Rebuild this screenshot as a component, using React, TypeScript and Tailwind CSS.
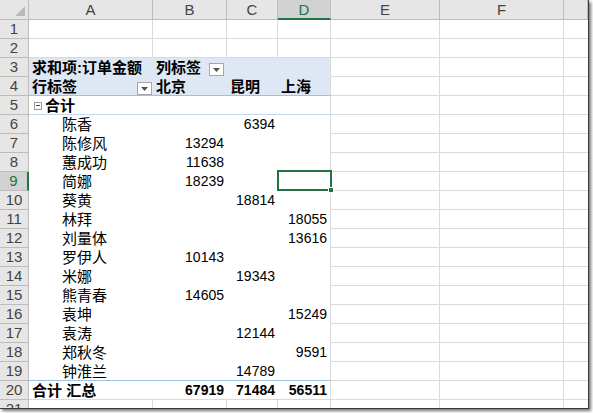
import React from "react";

const COLS = ["A", "B", "C", "D", "E", "F", ""];

type Cell = { text?: string; bold?: boolean; align?: "l" | "r"; indent?: number; dd?: "a" | "b"; tree?: boolean };

const names: [string, string, string, string][] = [
  ["陈香", "", "6394", ""],
  ["陈修风", "13294", "", ""],
  ["蕙成功", "11638", "", ""],
  ["简娜", "18239", "", ""],
  ["葵黄", "", "18814", ""],
  ["林拜", "", "", "18055"],
  ["刘量体", "", "", "13616"],
  ["罗伊人", "10143", "", ""],
  ["米娜", "", "19343", ""],
  ["熊青春", "14605", "", ""],
  ["袁坤", "", "", "15249"],
  ["袁涛", "", "12144", ""],
  ["郑秋冬", "", "", "9591"],
  ["钟淮兰", "", "14789", ""],
];

function rowCells(r: number): Cell[] {
  if (r === 3) return [{ text: "求和项:订单金额", bold: true }, { text: "列标签", bold: true, dd: "b" }, {}, {}];
  if (r === 4)
    return [
      { text: "行标签", bold: true, dd: "a" },
      { text: "北京", bold: true },
      { text: "昆明", bold: true },
      { text: "上海", bold: true },
    ];
  if (r === 5) return [{ text: "合计", bold: true, tree: true }, {}, {}, {}];
  if (r >= 6 && r <= 19) {
    const n = names[r - 6];
    return [
      { text: n[0], indent: 1 },
      { text: n[1], align: "r" },
      { text: n[2], align: "r" },
      { text: n[3], align: "r" },
    ];
  }
  if (r === 20)
    return [
      { text: "合计 汇总", bold: true },
      { text: "67919", bold: true, align: "r" },
      { text: "71484", bold: true, align: "r" },
      { text: "56511", bold: true, align: "r" },
    ];
  return [{}, {}, {}, {}];
}

function DropDown({ pos }: { pos: "a" | "b" }) {
  return (
    <span
      className={
        "absolute top-[5px] flex h-[13px] w-[15px] items-center justify-center border border-[#a6a6a6] bg-white " +
        (pos === "a" ? "right-[1px]" : "right-[3px]")
      }
    >
      <svg width="7" height="4" viewBox="0 0 7 4">
        <path d="M0 0 L7 0 L3.5 4 Z" fill="#555" />
      </svg>
    </span>
  );
}

function PivotCell({ r, c, cell }: { r: number; c: number; cell: Cell }) {
  const pivot = r >= 3 && r <= 20;
  let cls = "relative overflow-visible whitespace-nowrap px-[3px] leading-[19px] text-black ";
  cls += cell.align === "r" ? "text-[14px] " : "text-[15px] ";
  if (pivot) {
    if (r === 3 || r === 4) cls += "bg-[#dde8f4] ";
    else cls += "bg-white ";
    if (r === 4) cls += "border-b border-[#9bc2e6] ";
    else if (r === 5) cls += "border-b border-[#c5d9ee] ";
    else if (r === 19) cls += "border-b border-[#9bc2e6] ";
    else if (r === 20) cls += "border-b border-[#dadada] ";
    if (c === 3) cls += "border-r border-r-[#dadada] ";
  } else {
    cls += "border-r border-b border-[#dadada] bg-white ";
  }
  if (cell.bold) cls += "font-bold ";
  if (cell.align === "r") cls += "text-right pr-[3px] ";
  if (cell.indent) cls += "pl-[33px] ";
  return (
    <div className={cls}>
      {cell.tree ? (
        <span className="flex items-center">
          <span className="ml-[2px] mr-[3px] flex h-[8px] w-[8px] items-center justify-center border border-[#9a9a9a]">
            <span className="h-px w-[4px] bg-[#444]" />
          </span>
          {cell.text}
        </span>
      ) : (
        cell.text
      )}
      {cell.dd && <DropDown pos={cell.dd} />}
    </div>
  );
}

export default function App() {
  const rows = Array.from({ length: 21 }, (_, i) => i + 1);
  return (
    <div className="relative h-[413px] w-[593px] bg-white">
      <div
        className="h-[409px] w-[589px] overflow-hidden border-r border-b border-[#3a3a3a] bg-white shadow-[2px_2px_3px_rgba(0,0,0,0.55)]"
        style={{ fontFamily: '"Liberation Sans", "Noto Sans CJK SC", sans-serif' }}
      >
        <div className="grid grid-cols-[29px_124px_74px_51px_53px_109px_124px_24px] grid-rows-[20px_repeat(21,19px)]">
          <div className="relative border-r border-b border-[#bcbcbc] bg-[#e6e6e6]">
            <svg className="absolute right-[3px] bottom-[3px]" width="10" height="10" viewBox="0 0 10 10">
              <path d="M10 0 L10 10 L0 10 Z" fill="#b9b9b9" />
            </svg>
          </div>
          {COLS.map((c, i) =>
            c === "D" ? (
              <div
                key={i}
                className="border-r border-[#bcbcbc] border-b-2 border-b-[#217346] bg-[#d2d2d2] text-center text-[15px] leading-[19px] text-[#217346]"
              >
                {c}
              </div>
            ) : (
              <div
                key={i}
                className="border-r border-b border-[#bcbcbc] bg-[#e6e6e6] text-center text-[15px] leading-[19px] text-[#444]"
              >
                {c}
              </div>
            )
          )}
          {rows.map((r) => {
            const cells = rowCells(r);
            return (
              <React.Fragment key={r}>
                {r === 9 ? (
                  <div className="border-b border-[#bcbcbc] border-r-2 border-r-[#217346] bg-[#d2d2d2] text-center text-[15px] leading-[18px] text-[#217346]">
                    {r}
                  </div>
                ) : (
                  <div className="border-r border-b border-[#bcbcbc] bg-[#e6e6e6] text-center text-[15px] leading-[18px] text-[#444]">
                    {r}
                  </div>
                )}
                {cells.map((cell, c) => (
                  <PivotCell key={c} r={r} c={c} cell={cell} />
                ))}
                <div className="border-r border-b border-[#dadada] bg-white" />
                <div className="border-r border-b border-[#dadada] bg-white" />
                <div className="border-b border-[#dadada] bg-white" />
              </React.Fragment>
            );
          })}
        </div>
      </div>
      <div className="pointer-events-none absolute left-[277px] top-[170px] h-[21px] w-[55px] border-2 border-[#217346]">
        <span className="absolute -right-[4px] -bottom-[4px] h-[6px] w-[6px] border border-white bg-[#217346]" />
      </div>
    </div>
  );
}
